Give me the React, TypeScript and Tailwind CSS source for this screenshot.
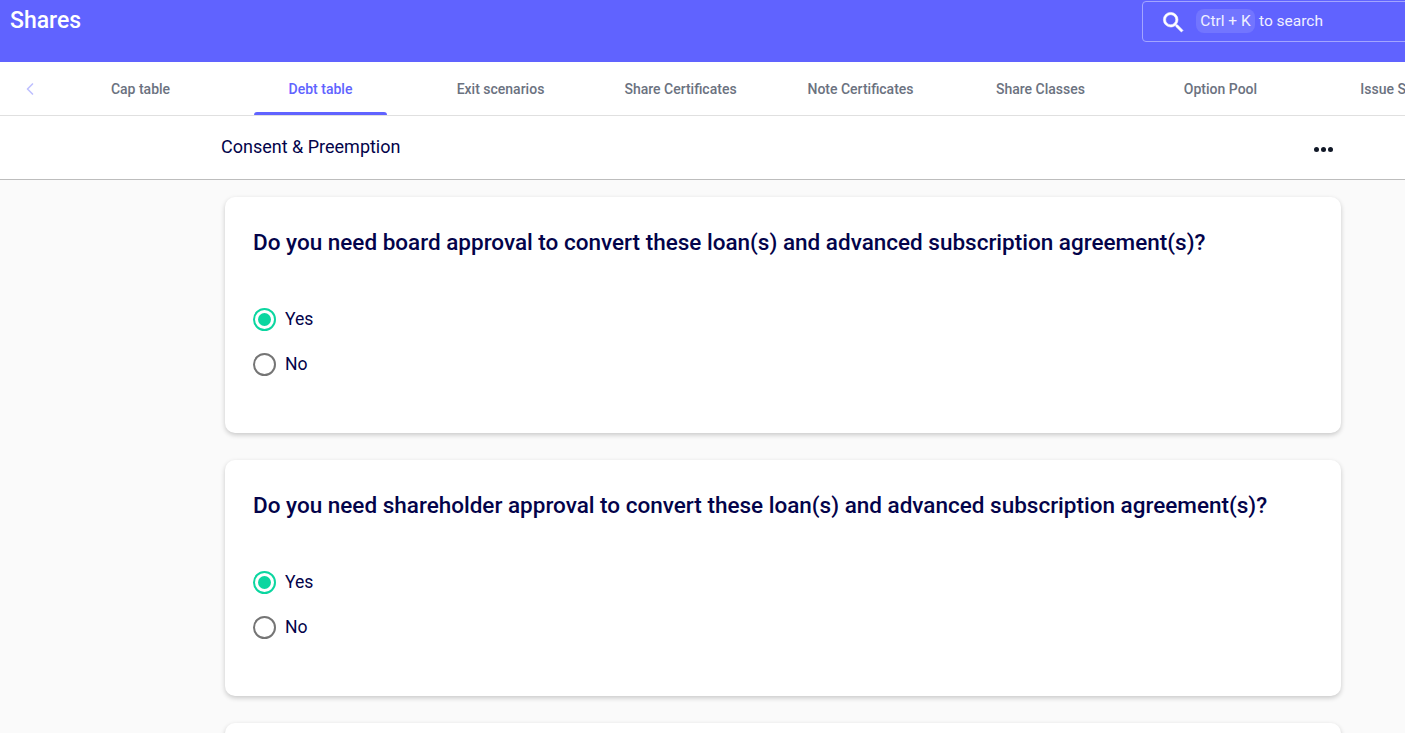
import { ChevronLeft } from 'lucide-react';

const tabs = ['Cap table', 'Debt table', 'Exit scenarios', 'Share Certificates', 'Note Certificates', 'Share Classes', 'Option Pool', 'Issue Shares'];

const questions = [
  'Do you need board approval to convert these loan(s) and advanced subscription agreement(s)?',
  'Do you need shareholder approval to convert these loan(s) and advanced subscription agreement(s)?',
];

function Radio({ label, checked }: { label: string; checked?: boolean }) {
  return (
    <div className="flex items-center h-[23px] gap-[9px]">
      <span className={`flex items-center justify-center w-[23px] h-[23px] rounded-full border-2 ${checked ? 'border-[#0bd6a0]' : 'border-[#757575]'}`}>
        {checked && <span className="w-[13px] h-[13px] rounded-full bg-[#0bd6a0]" />}
      </span>
      <span className="text-[17.6px] leading-[23px] text-[#03034a]">{label}</span>
    </div>
  );
}

export default function App() {
  return (
    <div className="h-screen overflow-hidden bg-[#fafafa] font-['Roboto',sans-serif]">
      <header className="h-[62px] bg-[#6063ff] flex items-start justify-between">
        <h1 className="pl-[10px] pt-[7px] text-[23px] leading-[28px] font-medium text-white">Shares</h1>
        <div className="mt-px w-[280px] h-[41px] shrink-0 -mr-[17px] flex items-center pl-[17px] border border-[#a3a5ff] rounded-[4px]">
          <svg width="27" height="27" viewBox="0 0 24 24" fill="#ffffff" stroke="#ffffff" strokeWidth="0.5" className="mt-[2px] shrink-0">
            <path d="M15.5 14h-.79l-.28-.27A6.471 6.471 0 0 0 16 9.5 6.5 6.5 0 1 0 9.5 16c1.61 0 3.09-.59 4.23-1.57l.27.28v.79l5 4.99L20.49 19l-4.99-5zm-6 0C7.01 14 5 11.99 5 9.5S7.01 5 9.5 5 14 7.01 14 9.5 11.99 14 9.5 14z" />
          </svg>
          <span className="ml-[9px] w-[59px] text-center h-[24px] leading-[24px] rounded-[8px] bg-[#7275ff] text-[15.5px] text-[#f0f0ff] -mt-[2px]">Ctrl + K</span>
          <span className="ml-[4px] text-[15.5px] leading-[24px] text-[#f0f0ff] -mt-[2px]">to search</span>
        </div>
      </header>

      <nav className="h-[54px] bg-white border-b border-[#e0e0e0] flex overflow-hidden">
        <div className="w-[50.5px] shrink-0 flex items-center pl-[20px]">
          <ChevronLeft size={20} className="text-[#bfc0ff] shrink-0" />
        </div>
        {tabs.map((tab) => {
          const active = tab === 'Debt table';
          return (
            <div key={tab} className="w-[180px] shrink-0 flex justify-center">
              <div className={`relative flex items-center justify-center px-[34.5px] pt-px whitespace-nowrap text-[14px] font-medium ${active ? 'text-[#6063ff]' : 'text-[#6b7280]'}`}>
                {tab}
                {active && <span className="absolute left-0 right-0 bottom-0 h-[3px] rounded-t-[3px] bg-[#6063ff]" />}
              </div>
            </div>
          );
        })}
      </nav>

      <div className="h-[64px] bg-white border-b border-[#bdbdbd] flex items-center justify-between pl-[221px] pr-[72px]">
        <span className="text-[18px] text-[#03034a] -mt-[3px]">Consent &amp; Preemption</span>
        <span className="flex gap-[2px] mt-[3px]">
          <span className="w-[5px] h-[5px] rounded-full bg-[#111827]" />
          <span className="w-[5px] h-[5px] rounded-full bg-[#111827]" />
          <span className="w-[5px] h-[5px] rounded-full bg-[#111827]" />
        </span>
      </div>

      <main className="ml-[225px] w-[1116px] pt-[17px] flex flex-col gap-[27px]">
        {questions.map((q) => (
          <section key={q} className="h-[236px] shrink-0 bg-white rounded-[10px] shadow-[0_2px_5px_rgba(0,0,0,0.2)] px-[28px] pt-[31px]">
            <h2 className="text-[22.5px] leading-[28px] font-medium text-[#03034a]">{q}</h2>
            <div className="mt-[52px] flex flex-col gap-[22px]">
              <Radio label="Yes" checked />
              <Radio label="No" />
            </div>
          </section>
        ))}
        <section className="h-[236px] shrink-0 bg-white rounded-[10px] shadow-[0_2px_5px_rgba(0,0,0,0.2)]" />
      </main>
    </div>
  );
}
